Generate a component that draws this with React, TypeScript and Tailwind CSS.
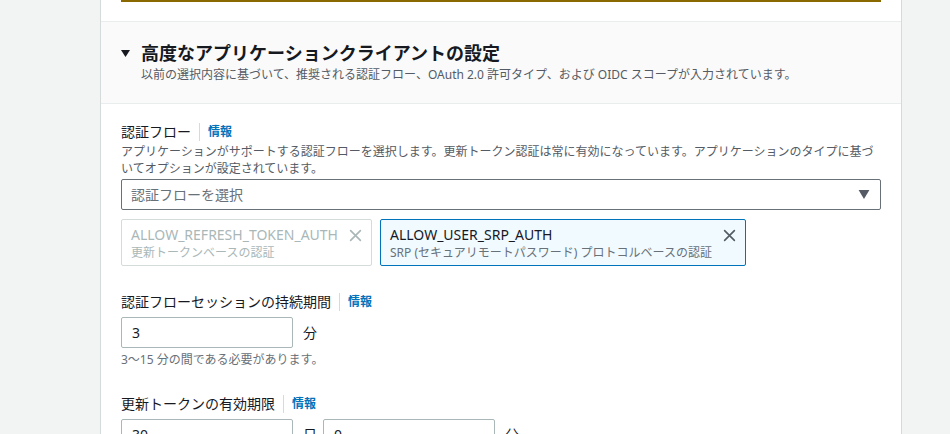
import React from "react";

const font = { fontFamily: '"Noto Sans", "Noto Sans CJK JP", sans-serif' };

function InfoLabel({ label }: { label: string }) {
  return (
    <div className="flex items-center text-[14px] leading-[22px] text-[#16191f]">
      <span>{label}</span>
      <span className="mx-[8px] h-[18px] w-px bg-[#d5dbdb]" />
      <span className="font-bold text-[12px] text-[#0073bb]">情報</span>
    </div>
  );
}

function XIcon({ className }: { className: string }) {
  return (
    <svg viewBox="0 0 16 16" className={className} fill="none" stroke="currentColor" strokeWidth="2" strokeLinecap="round">
      <path d="M2 2l12 12M14 2L2 14" />
    </svg>
  );
}

function Token({
  title,
  sub,
  active,
  width,
}: {
  title: string;
  sub: string;
  active?: boolean;
  width: string;
}) {
  return (
    <div
      className={`flex items-start justify-between rounded-[2px] border px-[9px] pt-[5px] pb-[4px] ${width} ${
        active ? "border-[#0073bb] bg-[#f1faff]" : "border-[#d5dbdb] bg-white"
      }`}
    >
      <div className="flex flex-col">
        <span className={`text-[14px] leading-[20px] ${active ? "text-[#16191f]" : "text-[#aab7b8]"}`}>{title}</span>
        <span className={`text-[12px] leading-[16px] ${active ? "text-[#687078]" : "text-[#aab7b8]"}`}>{sub}</span>
      </div>
      <XIcon className={`mt-[4px] h-[13px] w-[13px] ${active ? "text-[#545b64]" : "text-[#aab7b8]"}`} />
    </div>
  );
}

function NumberBox({ value }: { value: string }) {
  return (
    <div className="flex h-[31px] w-[172px] items-center rounded-[2px] border border-[#aab7b8] px-[10px] text-[14px] text-[#16191f]">
      {value}
    </div>
  );
}

export default function App() {
  return (
    <div className="h-[434px] overflow-hidden bg-[#f2f3f3]" style={font}>
      <div className="ml-[100px] h-full w-[802px] border-x border-[#d5dbdb] bg-white">
        <div className="px-[20px]">
          <div className="h-[2px] bg-[#8a6a00]" />
        </div>
        <div className="mt-[19px] border-y border-[#eaeded] bg-[#fafafa] px-[20px] pt-[17px] pb-[20px]">
          <div className="flex items-center">
            <svg viewBox="0 0 10 10" className="mr-[11px] h-[9px] w-[9px] fill-[#16191f]">
              <path d="M0 1h10L5 9z" />
            </svg>
            <h2 className="text-[18px] font-bold leading-[28px] text-[#16191f]">高度なアプリケーションクライアントの設定</h2>
          </div>
          <p className="pl-[20px] text-[12px] leading-[16px] text-[#545b64]">
            以前の選択内容に基づいて、推奨される認証フロー、OAuth 2.0 許可タイプ、および OIDC スコープが入力されています。
          </p>
        </div>

        <div className="px-[20px] pt-[17px]">
          <InfoLabel label="認証フロー" />
          <p className="text-[12px] leading-[17px] text-[#545b64]">
            アプリケーションがサポートする認証フローを選択します。更新トークン認証は常に有効になっています。アプリケーションのタイプに基づいてオプションが設定されています。
          </p>
          <div className="mt-[2px] flex h-[31px] items-center justify-between rounded-[2px] border border-[#687078] pl-[9px] pr-[10px] text-[14px] text-[#687078]">
            <span>認証フローを選択</span>
            <svg viewBox="0 0 12 10" className="h-[9px] w-[12px] fill-[#545b64]">
              <path d="M0 0h12L6 10z" />
            </svg>
          </div>

          <div className="mt-[9px] flex gap-[8px]">
            <Token title="ALLOW_REFRESH_TOKEN_AUTH" sub="更新トークンベースの認証" width="w-[251px]" />
            <Token
              title="ALLOW_USER_SRP_AUTH"
              sub="SRP (セキュアリモートパスワード) プロトコルベースの認証"
              width="w-[366px]"
              active
            />
          </div>

          <div className="mt-[25px]">
            <InfoLabel label="認証フローセッションの持続期間" />
            <div className="mt-[4px] flex items-center">
              <NumberBox value="3" />
              <span className="ml-[10px] text-[14px] text-[#16191f]">分</span>
            </div>
            <p className="mt-[4px] text-[12px] leading-[16px] text-[#687078]">3〜15 分の間である必要があります。</p>
          </div>

          <div className="mt-[25px]">
            <InfoLabel label="更新トークンの有効期限" />
            <div className="mt-[4px] flex items-center">
              <NumberBox value="30" />
              <span className="ml-[10px] mr-[6px] text-[14px] text-[#16191f]">日</span>
              <NumberBox value="0" />
              <span className="ml-[10px] text-[14px] text-[#16191f]">分</span>
            </div>
          </div>
        </div>
      </div>
    </div>
  );
}
